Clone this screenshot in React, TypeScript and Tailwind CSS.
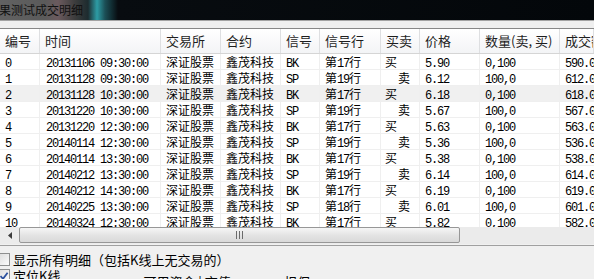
import React from 'react';

type Row = {
  id: number;
  time: string;
  signal: 'BK' | 'SP';
  line: string;
  price: string;
};

const rows: Row[] = [
  { id: 0, time: '20131106 09:30:00', signal: 'BK', line: '17', price: '5.90' },
  { id: 1, time: '20131128 09:30:00', signal: 'SP', line: '19', price: '6.12' },
  { id: 2, time: '20131128 10:30:00', signal: 'BK', line: '17', price: '6.18' },
  { id: 3, time: '20131220 10:30:00', signal: 'SP', line: '19', price: '5.67' },
  { id: 4, time: '20131220 12:30:00', signal: 'BK', line: '17', price: '5.63' },
  { id: 5, time: '20140114 12:30:00', signal: 'SP', line: '19', price: '5.36' },
  { id: 6, time: '20140114 13:30:00', signal: 'BK', line: '17', price: '5.38' },
  { id: 7, time: '20140212 13:30:00', signal: 'SP', line: '19', price: '6.14' },
  { id: 8, time: '20140212 14:30:00', signal: 'BK', line: '17', price: '6.19' },
  { id: 9, time: '20140225 13:30:00', signal: 'SP', line: '18', price: '6.01' },
  { id: 10, time: '20140324 12:30:00', signal: 'BK', line: '17', price: '5.82' },
];

const widths = [
  'w-[40px]',
  'w-[121px]',
  'w-[60px]',
  'w-[60px]',
  'w-[39px]',
  'w-[61px]',
  'w-[39px]',
  'w-[60px]',
  'w-[80px]',
  'flex-1',
];

const headers = ['编号', '时间', '交易所', '合约', '信号', '信号行', '买卖', '价格', '数量(卖, 买)', '成交额'];

const cjk = "font-['Noto_Sans_CJK_SC',sans-serif]";

const Mono: React.FC<{ children: React.ReactNode }> = ({ children }) => (
  <span className="font-['Liberation_Mono',monospace] text-[12px] tracking-[-1.2px]">{children}</span>
);

const Han: React.FC<{ children: React.ReactNode }> = ({ children }) => (
  <span className={`${cjk} text-[12px]`}>{children}</span>
);

const Checkbox: React.FC<{ checked?: boolean }> = ({ checked }) => (
  <div className="-ml-[3px] w-[13px] h-[13px] shrink-0 border border-[#8e8f8f] bg-[linear-gradient(135deg,#dcdcdc,#fbfbfb)] flex items-center justify-center">
    {checked && (
      <svg width="10" height="10" viewBox="0 0 10 10">
        <path d="M1.5 5 L4 7.8 L8.6 1.8" fill="none" stroke="#2a4f9e" strokeWidth="1.8" />
      </svg>
    )}
  </div>
);

const App: React.FC = () => {
  return (
    <div className="w-[594px] h-[279px] overflow-hidden bg-[#f0f0f0] flex flex-col">
      {/* window title */}
      <div className="h-[20px] shrink-0 flex items-center bg-[linear-gradient(90deg,#626262_0px,#5a5a5a_45px,#6b5a5e_58px,#3c3c3c_75px,#1d2b2f_88px,#2d9ca5_97px,#1b4f56_105px,#080c10_118px,#03070a_100%)]">
        <span className={`${cjk} text-[12px] leading-none text-[#111] -ml-[1px]`}>果测试成交明细</span>
      </div>
      <div className="h-[9px] shrink-0 border-t border-b border-t-[#a3a3a3] border-b-[#878787] bg-[#efefef]" />

      {/* list header */}
      <div className="h-[25px] shrink-0 flex border-b border-[#d5d5d5] bg-[linear-gradient(180deg,#ffffff,#f3f4f6)]">
        {headers.map((h, i) => (
          <div
            key={h}
            className={`${widths[i]} shrink-0 border-r border-[#dedfe1] pl-[5px] flex items-center ${cjk} text-[13px] text-[#1e1e1e] whitespace-nowrap overflow-hidden`}
          >
            {h}
          </div>
        ))}
      </div>

      {/* list body */}
      <div className="h-[173px] shrink-0 overflow-hidden bg-white">
        {rows.map((r) => {
          const buy = r.signal === 'BK';
          const price = parseFloat(r.price);
          return (
            <div
              key={r.id}
              className={`h-[16px] flex border-b border-[#efefef] text-black leading-[15px] ${r.id === 2 ? 'bg-[#f0f0f0]' : ''}`}
            >
              <div className={`${widths[0]} shrink-0 border-r border-[#efefef] pl-[5px]`}>
                <Mono>{r.id}</Mono>
              </div>
              <div className={`${widths[1]} shrink-0 border-r border-[#efefef] pl-[6px] whitespace-pre`}>
                <Mono>{r.time}</Mono>
              </div>
              <div className={`${widths[2]} shrink-0 border-r border-[#efefef] pl-[5px]`}>
                <Han>深证股票</Han>
              </div>
              <div className={`${widths[3]} shrink-0 border-r border-[#efefef] pl-[5px]`}>
                <Han>鑫茂科技</Han>
              </div>
              <div className={`${widths[4]} shrink-0 border-r border-[#efefef] pl-[5px]`}>
                <Mono>{r.signal}</Mono>
              </div>
              <div className={`${widths[5]} shrink-0 border-r border-[#efefef] pl-[5px]`}>
                <Han>第</Han>
                <Mono>{r.line}</Mono>
                <Han>行</Han>
              </div>
              <div className={`${widths[6]} shrink-0 border-r border-[#efefef] ${buy ? 'pl-[4px]' : 'pl-[17px]'}`}>
                <Han>{buy ? '买' : '卖'}</Han>
              </div>
              <div className={`${widths[7]} shrink-0 border-r border-[#efefef] pl-[5px]`}>
                <Mono>{r.price}</Mono>
              </div>
              <div className={`${widths[8]} shrink-0 border-r border-[#efefef] pl-[5px]`}>
                <Mono>{buy ? '0,100' : '100,0'}</Mono>
              </div>
              <div className={`${widths[9]} pl-[5px] whitespace-nowrap overflow-hidden`}>
                <Mono>{(price * 100).toFixed(1)}</Mono>
              </div>
            </div>
          );
        })}
      </div>

      {/* horizontal scrollbar */}
      <div className="h-[17px] shrink-0 flex bg-[#ebebeb]">
        <div className="w-[19px] shrink-0 flex items-center justify-center">
          <svg width="4" height="7" viewBox="0 0 4 7">
            <path d="M4 0 L0 3.5 L4 7 Z" fill="#3c3c3c" />
          </svg>
        </div>
        <div className="w-[441px] h-[16px] rounded-[2px] border border-[#979797] bg-[linear-gradient(180deg,#f6f6f6,#e4e4e4_50%,#d9d9d9)] flex items-center justify-center">
          <svg width="7" height="8" viewBox="0 0 7 8">
            <path d="M0.5 0 V8 M3.5 0 V8 M6.5 0 V8" stroke="#6b6b6b" strokeWidth="1" />
          </svg>
        </div>
      </div>
      <div className="h-[1px] shrink-0 bg-[#f0f0f0]" />
      <div className="h-[1px] shrink-0 bg-[#a0a0a0]" />

      {/* options */}
      <div className="flex flex-col pt-[7px] gap-[3px]">
        <div className="flex items-center gap-[3px] h-[13px]">
          <Checkbox />
          <span className={`${cjk} text-[13px] leading-none text-black whitespace-nowrap`}>
            显示所有明细（包括K线上无交易的）
          </span>
        </div>
        <div className="flex items-start h-[13px]">
          <div className="flex items-center gap-[3px] h-[13px]">
            <Checkbox checked />
            <span className={`${cjk} text-[13px] leading-none text-black whitespace-nowrap`}>定位K线</span>
          </div>
          <div className={`ml-[83px] mt-[6px] flex ${cjk} text-[13px] leading-none text-black whitespace-nowrap`}>
            <span>可用资金 | 市值</span>
            <span className="ml-[46px]">- 担保</span>
          </div>
        </div>
      </div>
    </div>
  );
};

export default App;
